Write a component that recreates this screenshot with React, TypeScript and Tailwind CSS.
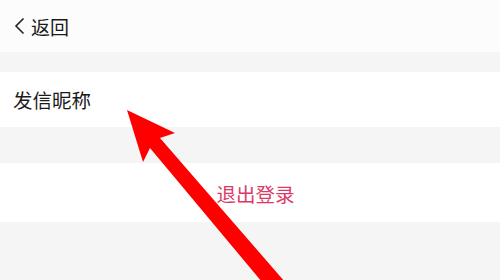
const font = { fontFamily: '"Noto Sans CJK SC", "Noto Sans", sans-serif' };

export default function App() {
  return (
    <div className="relative w-[500px] h-[280px] overflow-hidden bg-[#f5f5f5]" style={font}>
      {/* Header */}
      <div className="h-[52px] bg-[#fcfcfc] flex items-center pl-[13px] text-[#1a1a1a]">
        <svg width="13" height="18" viewBox="0 0 13 18" className="mr-[5px] mt-[-1px]">
          <path d="M10.5 1.5 L3 9 L10.5 16.5" fill="none" stroke="#222" strokeWidth="1.6" />
        </svg>
        <span className="text-[19px] leading-none">返回</span>
      </div>

      <div className="h-[20px]" />

      {/* Nickname row */}
      <div className="h-[55px] bg-white flex items-center pl-[13px]">
        <span className="text-[19.5px] leading-none text-[#1a1a1a]">发信昵称</span>
      </div>

      <div className="h-[36px]" />

      {/* Logout */}
      <div className="h-[59px] bg-white flex items-center justify-center">
        <span className="text-[19.5px] leading-none text-[#db3a67] ml-[11px] mt-[2px]">退出登录</span>
      </div>

      {/* Red arrow annotation */}
      <svg className="absolute inset-0 pointer-events-none" width="500" height="280" viewBox="0 0 500 280">
        <polygon
          points="127,110 175,133 160,138 285,282 262,282 150,148 143,162"
          fill="#ff0000"
        />
      </svg>
    </div>
  );
}
